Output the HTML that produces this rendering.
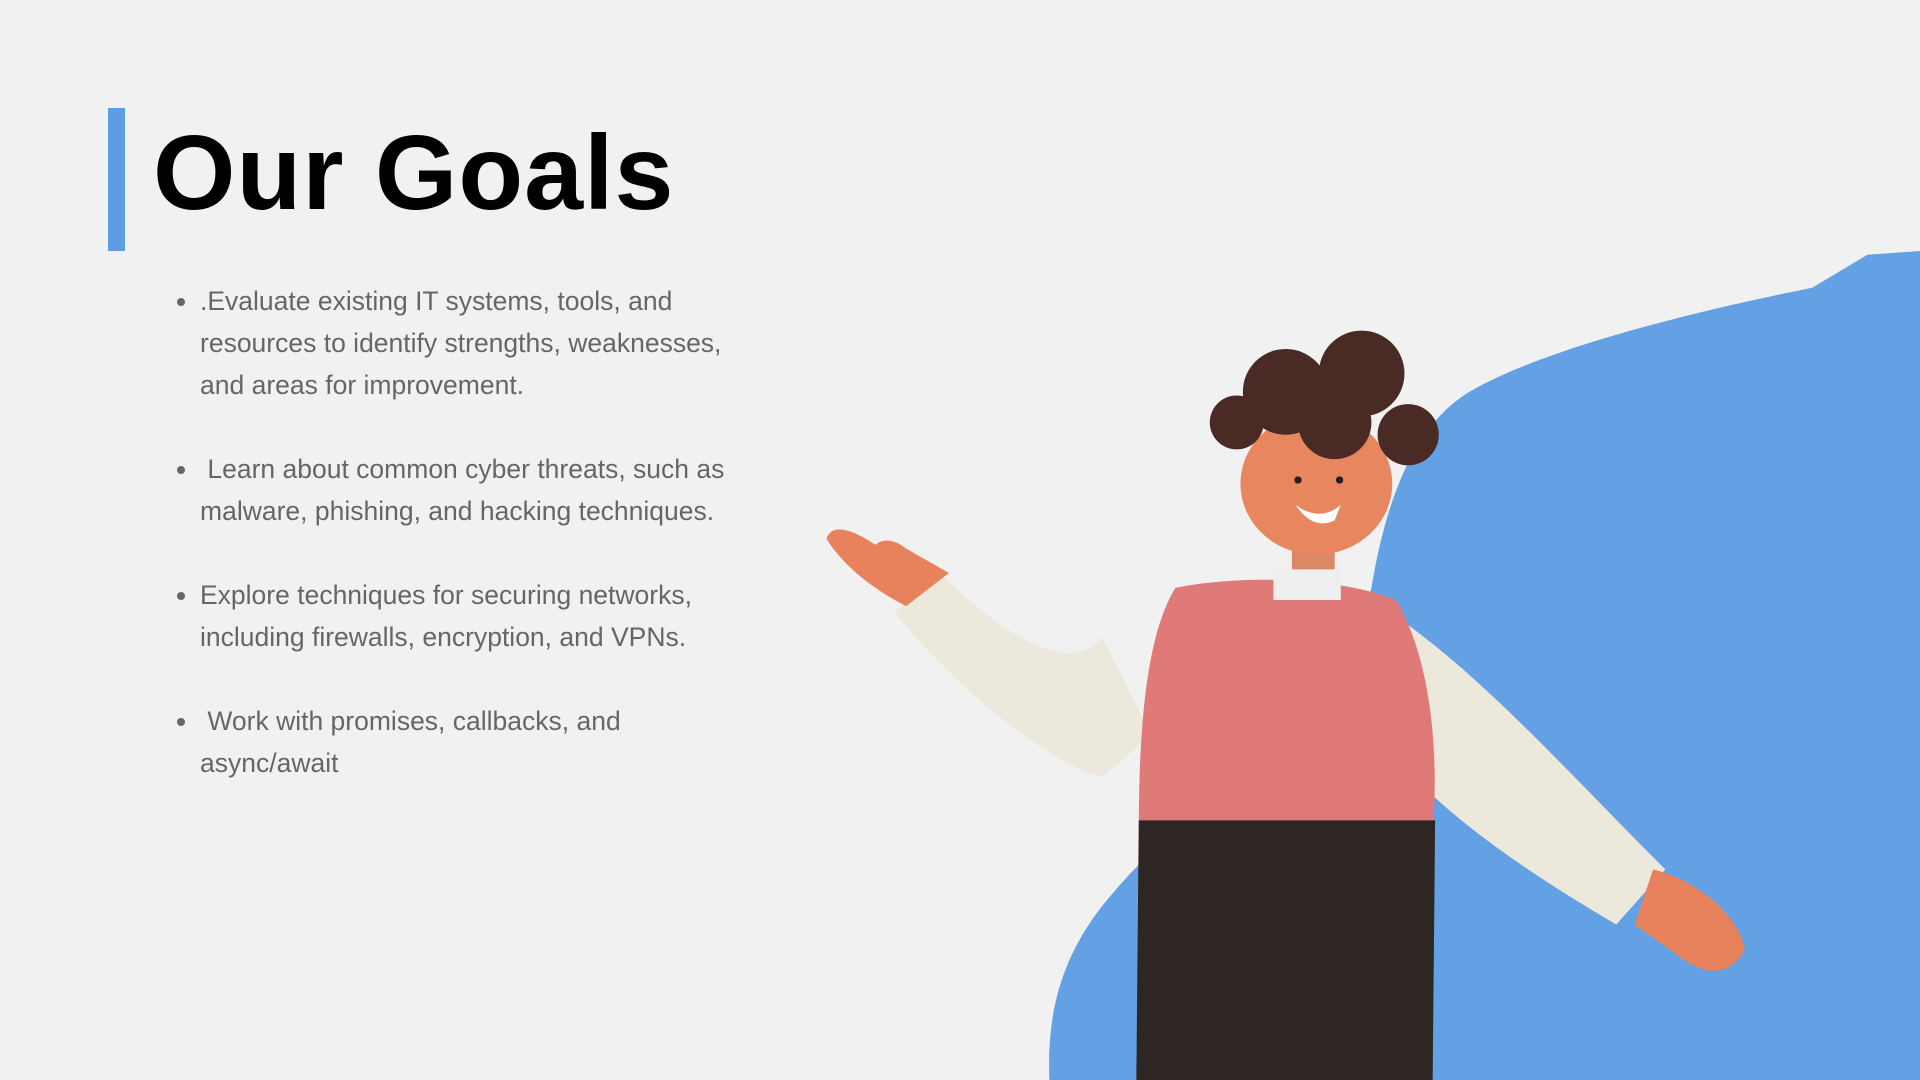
<!DOCTYPE html>
<html><head><meta charset="utf-8"><style>
html,body{margin:0;padding:0;width:1920px;height:1080px;overflow:hidden;background:#f1f1f1;font-family:"Liberation Sans",sans-serif}
svg{position:absolute;left:0;top:0}
.bar{position:absolute;left:108px;top:108px;width:17px;height:143px;background:#5f9de3}
h1{position:absolute;left:153px;top:108px;margin:0;font-size:106px;font-weight:bold;color:#000;letter-spacing:1px;line-height:130px}
ul{position:absolute;left:176px;top:280px;margin:0;padding:0 0 0 24px;width:560px;color:#666;font-size:26.5px;line-height:42px}
li{margin-bottom:42px}
</style></head><body>
<svg width="1920" height="1080" viewBox="0 0 1568 882">
<path d="M1568 205 L1525 208 L1480 235 C1380 255 1260 285 1200 320 C1150 350 1130 420 1120 480 L1100 560 C1000 640 940 690 900 740 C865 785 855 830 857 882 L1568 882 Z" fill="#63a0e4"/>
<path d="M770 470 L730 500 C780 560 850 620 900 635 L940 600 L900 520 C870 560 800 500 770 470Z" fill="#ece9dc"/>
<path d="M1120 490 C1200 540 1270 620 1360 710 L1320 755 C1260 720 1200 680 1160 640Z" fill="#ece9dc"/>
<path d="M960 480 C1010 470 1090 470 1140 490 C1170 540 1175 620 1170 680 L930 680 C930 600 935 520 960 480Z" fill="#e07a78"/>
<path d="M930 670 L1172 670 L1170 882 L928 882Z" fill="#2d2622"/>
<path d="M1055 415 L1090 415 L1090 470 L1055 470Z" fill="#dd8865"/>
<path d="M1040 465 L1095 465 L1095 490 L1040 490Z" fill="#eee"/>
<path d="M775 468 L740 495 C720 485 690 465 675 440 C680 425 700 435 715 445 C720 440 730 440 740 448 Z" fill="#e8825c"/>
<path d="M1350 710 C1390 720 1420 750 1425 775 C1415 795 1395 800 1370 780 L1335 755Z" fill="#e8825c"/>
<ellipse cx="1075" cy="395" rx="62" ry="58" fill="#e8865f"/>
<circle cx="1010" cy="345" r="22" fill="#4a2a24"/>
<circle cx="1050" cy="320" r="35" fill="#4a2a24"/>
<circle cx="1112" cy="305" r="35" fill="#4a2a24"/>
<circle cx="1150" cy="355" r="25" fill="#4a2a24"/>
<circle cx="1090" cy="345" r="30" fill="#4a2a24"/>
<path d="M1058 412 C1070 422 1085 422 1095 412 L1090 425 C1080 430 1068 428 1058 412Z" fill="#fff"/>
<circle cx="1060" cy="392" r="3" fill="#222"/><circle cx="1094" cy="392" r="3" fill="#222"/>
</svg>
<div class="bar"></div>
<h1>Our Goals</h1>
<ul>
<li>.Evaluate existing IT systems, tools, and resources to identify strengths, weaknesses, and areas for improvement.</li>
<li>&nbsp;Learn about common cyber threats, such as malware, phishing, and hacking techniques.</li>
<li>Explore techniques for securing networks, including firewalls, encryption, and VPNs.</li>
<li>&nbsp;Work with promises, callbacks, and async/await</li>
</ul>
</body></html>
